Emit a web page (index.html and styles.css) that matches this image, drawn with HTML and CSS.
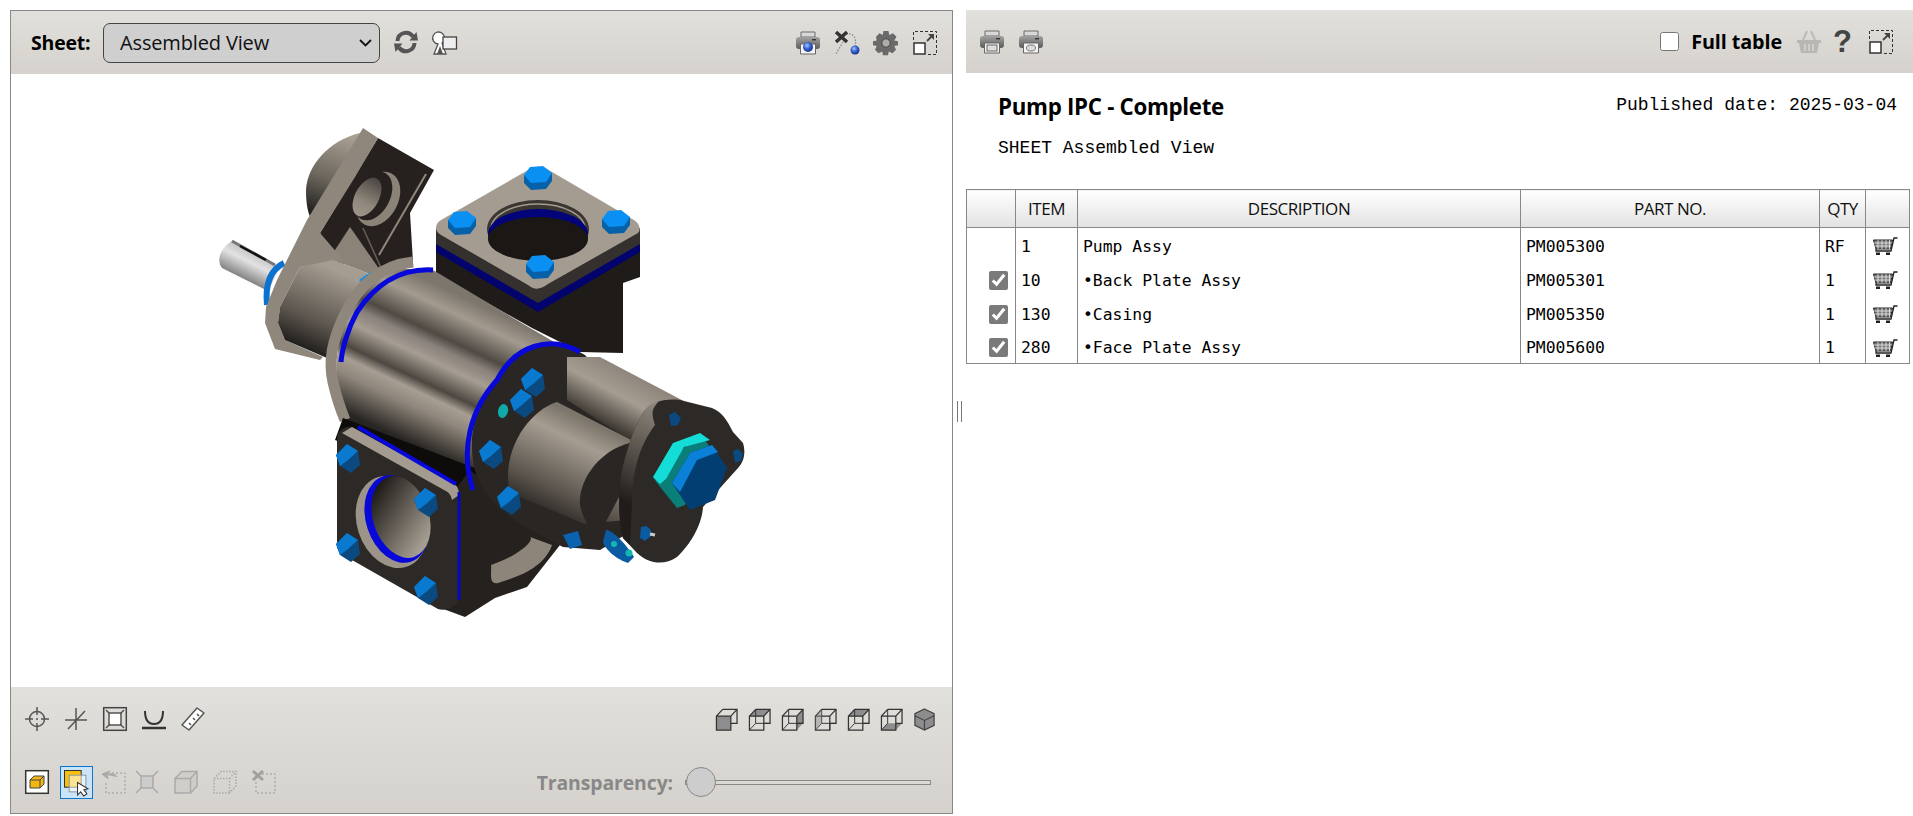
FILE: index.html
```html
<!DOCTYPE html>
<html lang="en">
<head>
<meta charset="utf-8">
<title>Pump IPC - Complete</title>
<link rel="stylesheet" href="styles.css">
</head>
<body>
<svg class="defs" width="0" height="0" aria-hidden="true">
  <defs>
    <linearGradient id="gPrint" x1="0" y1="0" x2="0" y2="1"><stop offset="0" stop-color="#a2a2a2"/><stop offset="1" stop-color="#5c5c5c"/></linearGradient>
    <radialGradient id="gBall" cx=".4" cy=".35" r=".7"><stop offset="0" stop-color="#a8c4f8"/><stop offset=".5" stop-color="#3360d0"/><stop offset="1" stop-color="#142c80"/></radialGradient>
    <symbol id="printer" viewBox="0 0 24 24">
      <path d="M5 1h14v5H5z" fill="#d8d8d8" stroke="#6a6a6a"/>
      <rect x="0" y="6" width="24" height="12" rx="3" fill="url(#gPrint)"/>
      <rect x="16" y="8" width="4" height="1.4" fill="#333"/>
      <path d="M4.5 13h15v10h-15z" fill="#f4f4f4" stroke="#666"/>
    </symbol>
    <symbol id="expand" viewBox="0 0 24 24">
      <path d="M.5 9V.5H23.500V23.500H14" fill="none" stroke="#333" stroke-dasharray="3 2"/>
      <rect x="1" y="12" width="11" height="11" fill="#fff" stroke="#333" stroke-width="1.500"/>
      <path d="M14 10 19 5" stroke="#444" stroke-width="1.800"/>
      <path d="M15 3H21V9Z" fill="#444"/>
    </symbol>
    <g id="cube">
      <path d="M1.500 8.500H16.500V23H1.500zM8 1.500H23V16H16.500M1.500 8.500L8 1.500M16.500 8.500L23 1.500" fill="none" stroke="#333" stroke-width="1.300"/>
    </g>
    <symbol id="cart" viewBox="0 0 26 20">
      <path d="M.5 4h19l-2 9H3z" fill="#777" stroke="#222"/>
      <path d="M1 7h18M2 10h16M5 4v9M9 4v9M13 4v9M16.500 4v9" stroke="#eee" stroke-width=".8"/>
      <path d="M3 13v2h15L21 2h3.500" fill="none" stroke="#222" stroke-width="1.300"/>
      <rect x="3" y="16.500" width="4" height="2.500" fill="#222"/><rect x="13" y="16.500" width="4" height="2.500" fill="#222"/>
    </symbol>
    <linearGradient id="gBarrel" gradientUnits="userSpaceOnUse" x1="390" y1="470" x2="470" y2="300">
      <stop offset="0" stop-color="#030303"/><stop offset=".18" stop-color="#2a2724"/><stop offset=".36" stop-color="#8f877c"/><stop offset=".44" stop-color="#a69e92"/><stop offset=".5" stop-color="#4c4741"/><stop offset=".62" stop-color="#a69e92"/><stop offset=".7" stop-color="#88807a"/><stop offset=".76" stop-color="#4e4943"/><stop offset=".9" stop-color="#a39b8f"/><stop offset="1" stop-color="#7d766c"/>
    </linearGradient>
    <linearGradient id="gCyl" gradientUnits="userSpaceOnUse" x1="525" y1="520" x2="575" y2="415">
      <stop offset="0" stop-color="#14110f"/><stop offset=".35" stop-color="#5a544d"/><stop offset=".8" stop-color="#a59d91"/><stop offset="1" stop-color="#7c756b"/>
    </linearGradient>
    <linearGradient id="gCylTop" gradientUnits="userSpaceOnUse" x1="590" y1="430" x2="625" y2="365">
      <stop offset="0" stop-color="#15120f"/><stop offset=".6" stop-color="#a59d91"/><stop offset="1" stop-color="#8a8278"/>
    </linearGradient>
    <linearGradient id="gLobe" gradientUnits="userSpaceOnUse" x1="295" y1="360" x2="335" y2="270">
      <stop offset="0" stop-color="#050505"/><stop offset=".45" stop-color="#5c564f"/><stop offset="1" stop-color="#a59d91"/>
    </linearGradient>
    <linearGradient id="gBear" gradientUnits="userSpaceOnUse" x1="315" y1="225" x2="345" y2="135">
      <stop offset="0" stop-color="#0c0c0c"/><stop offset=".5" stop-color="#6b655c"/><stop offset="1" stop-color="#a89f93"/>
    </linearGradient>
    <linearGradient id="gBore" gradientUnits="userSpaceOnUse" x1="372" y1="170" x2="372" y2="225">
      <stop offset="0" stop-color="#3a3632"/><stop offset=".6" stop-color="#8f877c"/><stop offset="1" stop-color="#a59d91"/>
    </linearGradient>
    <linearGradient id="gShaft" gradientUnits="userSpaceOnUse" x1="238" y1="282" x2="255" y2="248">
      <stop offset="0" stop-color="#666"/><stop offset=".6" stop-color="#e2e2e2"/><stop offset="1" stop-color="#b8b8b8"/>
    </linearGradient>
    <linearGradient id="gHole" gradientUnits="userSpaceOnUse" x1="375" y1="490" x2="420" y2="545">
      <stop offset="0" stop-color="#1c1916"/><stop offset="1" stop-color="#a59d91"/>
    </linearGradient>
    <linearGradient id="gRim" gradientUnits="userSpaceOnUse" x1="620" y1="500" x2="670" y2="400">
      <stop offset="0" stop-color="#1f1c1a"/><stop offset="1" stop-color="#9a9286"/>
    </linearGradient>
    <g id="boltUp">
      <path d="M-14-3V5L-7 12 8 11 14 3V-5Z" fill="#0661a8"/>
      <path d="M-14-3-8-11 5-12 14-5 8 4-7 5Z" fill="#0a90f2"/>
    </g>
    <g id="boltFront">
      <path d="M-13-3-2-14 9-7 11 7 2 15-9 8Z" fill="#0a4a80"/>
      <path d="M-13-3-2-14 9-7-1 2-9 8Z" fill="#0a7ad0"/>
    </g>
  </defs>
</svg>

<main class="page">
  <section class="viewer">
    <header class="bar bar-top">
      <label class="sheet-label" for="sheet">Sheet:</label>
      <select id="sheet" class="sheet-select"><option>Assembled View</option></select>
      <svg class="ic i-refresh" viewBox="0 0 24 24"><path d="M3.500 11A8.500 8.500 0 0 1 19 6.500" fill="none" stroke="#555" stroke-width="4"/><path d="M15.500 10.500 24 10.500 22.500 2z" fill="#555"/><path d="M20.500 13A8.500 8.500 0 0 1 5 17.500" fill="none" stroke="#555" stroke-width="4"/><path d="M8.500 13.500 0 13.500 1.500 22z" fill="#555"/></svg>
      <svg class="ic i-view" viewBox="0 0 24 24"><path d="M1 23 5 13A6 6 0 1 1 9 12L13 23Z" fill="#fff" stroke="#555" stroke-width="1.300"/><path d="M4 23 7 15l3 8z" fill="#555"/><rect x="10" y="6" width="13.500" height="12" fill="#eee" stroke="#444" stroke-width="1.300"/></svg>
      <span class="spacer"></span>
      <svg class="ic"><use href="#printer"/><circle cx="12" cy="16" r="5" fill="url(#gBall)"/></svg>
      <svg class="ic" viewBox="0 0 24 24"><path d="M11 3C19 2 21 6 20.500 15M8 11 1 23" fill="none" stroke="#888" stroke-width="1.300" stroke-dasharray="1.500 1.500"/><path d="M1 1 12 11M12 1 1 11" stroke="#333" stroke-width="3.500"/><circle cx="20" cy="19" r="4.500" fill="url(#gBall)"/></svg>
      <svg class="ic" viewBox="0 0 24 24"><path d="M9.500 0h5l.8 4 3.700-1.700 3.500 3.500L20.300 9.500l3.700.8v4l-3.700.8 1.700 3.700-3.500 3.500-3.700-1.700-.8 3.600h-5l-.8-3.600-3.700 1.700-3.500-3.500 1.700-3.700-3.700-.8v-4l3.700-.8L2 5.800l3.500-3.500 3.200 1.700z" fill="#6a6a6a"/><circle cx="12" cy="12" r="4.200" fill="#b0aca6" stroke="#444"/></svg>
      <svg class="ic"><use href="#expand"/></svg>
    </header>

    <div class="stage">
      <svg class="pump" viewBox="11 74 941 613" role="img" aria-label="Assembled pump model">
        <!-- shaft -->
        <path d="M232 241 280 267 268 291 222 268C217 262 218 250 232 241Z" fill="url(#gShaft)"/>
        <path d="M232 241 275 265" stroke="#777" stroke-width="3"/>
        <path d="M240 246 266 260" stroke="#111" stroke-width="2.500"/>
        <path d="M284 263C270 270 265 285 267 305" fill="none" stroke="#0b72d0" stroke-width="6"/>
        <!-- bearing behind the plate -->
        <path d="M360 133C330 140 307 165 306 190C306 205 308 215 313 222L362 150Z" fill="url(#gBear)"/>
        <!-- back plate -->
        <path d="M378 138 434 170 410 213 413 262 382 270 333 262 320 233Z" fill="#26211f"/>
        <path d="M350 227 382 273 367 273 333 260 333 253Z" fill="#8b8378"/>
        <path d="M363 228 382 270" stroke="#67605a" stroke-width="1.500"/>
        <path d="M363 128 378 138 355 177 320 233 345 262 300 267 280 307 278 323 285 340 323 357 320 360 275 349 265 323 266 307 277 280 307 220Z" fill="#8f877c"/>
        <ellipse cx="378" cy="199" rx="20" ry="29" transform="rotate(28 378 199)" fill="#8b8378"/>
        <ellipse cx="373" cy="196" rx="17" ry="26" transform="rotate(28 373 196)" fill="#26211f"/>
        <ellipse cx="367" cy="197" rx="12" ry="21" transform="rotate(28 367 197)" fill="url(#gBore)"/>
        <path d="M426 174 379 255" stroke="#8f877c" stroke-width="2"/>
        <path d="M333 260 300 267 280 307 278 323 285 340 327 358 345 345 375 285 367 273Z" fill="url(#gLobe)"/>
        <path d="M370 272 373 281 365 287 359 280Z" fill="#0a90f2"/>

        <!-- neck & top flange -->
        <path d="M436 228V274L532 328 580 352 623 353V283L640 277V228L538 285Z" fill="#1f1b19"/>
        <path d="M436 228 538 288 640 228V248L538 308 436 248Z" fill="#34302d"/>
        <path d="M436 244 538 303 640 244V252L538 312 436 252Z" fill="#03036e"/>
        <path d="M436 228C436 224 438 222 441 220L530 169C536 166 541 166 547 169L634 220C640 224 641 230 638 233L548 284C540 290 534 290 528 285L441 235C438 233 436 231 436 228Z" fill="#a59c91"/>
        <ellipse cx="538" cy="229" rx="51" ry="29" fill="#3a3632"/>
        <ellipse cx="538" cy="229" rx="47" ry="25" fill="none" stroke="#a59c91" stroke-width="1.500"/>
        <ellipse cx="538" cy="234" rx="50" ry="25" fill="#04047a"/>
        <ellipse cx="538" cy="239" rx="50" ry="22" fill="#1b1715"/>
        <use href="#boltUp" x="538" y="178"/>
        <use href="#boltUp" x="462" y="223"/>
        <use href="#boltUp" x="616" y="222"/>
        <use href="#boltUp" x="540" y="267"/>

        <!-- main barrel -->
        <path d="M345 420C325 370 340 300 385 268L433 270 525 325 585 360 560 430 470 485Z" fill="url(#gBarrel)"/>
        <path d="M413 262C385 265 360 280 343 318 333 340 328 360 333 382 336 395 340 408 345 420" fill="none" stroke="#8f877c" stroke-width="11"/>
        <path d="M433 270C400 268 375 285 357 312 347 330 342 350 341 362" fill="none" stroke="#0808d8" stroke-width="5"/>

        <!-- lower body & flange -->
        <path d="M343 418 335 440 460 490 480 470Z" fill="#0e0c0b"/>
        <path d="M457 487 470 470 560 545 527 587 495 598 465 617 438 607Z" fill="#25211f"/>
        <path d="M491 565C520 555 535 540 530 537L552 545C545 565 525 575 498 583 488 585 492 572 491 565Z" fill="#8d857a"/>
        <path d="M337 440C337 430 345 426 352 427L452 482C458 486 459 490 459 495V598C459 606 446 612 438 609L345 556C340 552 337 550 337 545Z" fill="#2d2926"/>
        <path d="M352 427 452 482C458 486 459 490 459 495L452 500C451 494 448 492 444 490L342 433Z" fill="#a49b90"/>
        <path d="M358 427 456 484" stroke="#0808d8" stroke-width="4"/>
        <path d="M459 492V600" stroke="#0808b8" stroke-width="3"/>
        <ellipse cx="392" cy="522" rx="35" ry="47" transform="rotate(-18 392 522)" fill="#9c9489"/>
        <ellipse cx="397" cy="519" rx="31" ry="45" transform="rotate(-18 397 519)" fill="#0808d8"/>
        <ellipse cx="401" cy="517" rx="28" ry="42" transform="rotate(-18 401 517)" fill="url(#gHole)"/>
        <use href="#boltFront" x="349" y="458"/>
        <use href="#boltFront" x="427" y="502"/>
        <use href="#boltFront" x="349" y="547"/>
        <use href="#boltFront" x="427" y="590"/>

        <!-- rear flange of gearbox -->
        <path d="M497 380C515 345 550 335 585 355L640 420 625 535 600 550 563 547C530 530 485 510 475 470C465 430 480 400 497 380Z" fill="#2a2624"/>
        <path d="M580 352C550 335 515 345 497 380C470 410 460 450 473 490" fill="none" stroke="#0808d8" stroke-width="5"/>
        <!-- underside bits -->
        <path d="M563 535 578 531 582 545 570 549Z" fill="#0b62ae"/>
        <path d="M606 530C615 530 632 553 634 557L628 563C618 560 605 550 603 542Z" fill="#0a5ba2"/>
        <circle cx="614" cy="544" r="3" fill="#12b8b0"/><circle cx="629" cy="553" r="3.500" fill="#12b8b0"/>
        <!-- upper cylinder -->
        <path d="M567 357 600 357 697 408 660 460 567 400Z" fill="url(#gCylTop)"/>
        <!-- front cylinder -->
        <path d="M557 402 637 443 625 520 585 524 510 493C500 450 530 410 557 402Z" fill="url(#gCyl)"/>
        <path d="M630 443C600 450 578 480 580 505 582 515 585 520 588 525L600 533 628 480Z" fill="#2a2624"/>
        <!-- end plate -->
        <path d="M643 413C650 402 665 398 680 400L712 408C722 412 727 420 733 432L743 443C746 452 744 462 738 468L703 507C702 525 690 545 677 557 665 565 650 565 637 553L623 538C618 520 618 490 622 470 628 445 635 425 643 413Z" fill="#2d2926"/>
        <path d="M643 413C635 425 628 445 622 470 618 490 618 520 623 538L630 545 632 505C632 470 640 445 655 425 652 415 650 410 660 400 652 402 646 408 643 413Z" fill="url(#gRim)"/>
        <!-- bolts on plate -->
        <use href="#boltFront" x="492" y="454"/>
        <use href="#boltFront" x="523" y="403"/>
        <use href="#boltFront" x="534" y="382"/>
        <use href="#boltFront" x="510" y="500"/>
        <ellipse cx="503" cy="411" rx="5" ry="7" fill="#10a8a8" transform="rotate(15 503 411)"/>
        <path d="M669 415 675 412 681 418 678 425 671 426Z" fill="#0a4a80"/>
        <path d="M733 451 738 449 743 454 741 461 735 463Z" fill="#0a4a80"/>
        <path d="M641 527 646 526 651 530 651 536 645 541 640 538Z" fill="#0a5ba2"/>
        <path d="M650 534 655 535" stroke="#ccc" stroke-width="3"/>
        <!-- plug -->
        <path d="M653 477 657 483 677 508 685 505 712 450 700 433Z" fill="#0a7f7a"/>
        <path d="M653 477 673 443 700 433 710 440 684 447 666 479 660 484Z" fill="#14dcd6"/>
        <path d="M672 483 690 453 712 445 727 468 715 500 690 510Z" fill="#023e72"/>
        <path d="M672 483 690 453 712 445 718 452 697 460 680 492Z" fill="#0a80d8"/>
      </svg>
    </div>

    <footer class="bar bar-bottom">
      <div class="row row-one">
        <svg class="ic tool" viewBox="0 0 24 24"><circle cx="12" cy="12" r="7.500" fill="none" stroke="#555" stroke-width="1.500"/><path d="M12 0V8M12 16V24M0 12H8M16 12H24" stroke="#555" stroke-width="1.500"/><circle cx="12" cy="12" r="1" fill="#555"/></svg>
        <svg class="ic tool" viewBox="0 0 24 24"><path d="M12 1V23M1 13H23M4 22 21 4" stroke="#555" stroke-width="1.500"/></svg>
        <svg class="ic tool" viewBox="0 0 24 24"><rect x=".7" y=".7" width="22.600" height="22.600" fill="none" stroke="#444" stroke-width="1.500"/><rect x="6" y="6" width="12" height="12" fill="#fff" stroke="#555" stroke-width="1.500"/><path d="M3 3 7 7M21 3 17 7M3 21 7 17M21 21 17 17" stroke="#555" stroke-width="1.500"/></svg>
        <svg class="ic tool" viewBox="0 0 24 24"><path d="M3 4C3 14 7 17 12 17S21 14 21 4" fill="none" stroke="#333" stroke-width="2"/><path d="M0 21H24" stroke="#333" stroke-width="2.500"/></svg>
        <svg class="ic tool" viewBox="0 0 24 24"><path d="M16 1 23 6 8 23 1 18Z" fill="#fff" stroke="#555" stroke-width="1.500" stroke-linejoin="round"/><path d="M16 7 18 9M12 11 14 13M8 16 10 18" stroke="#555" stroke-width="1.500"/></svg>
        <span class="spacer"></span>
        <span class="cubes">
          <svg class="ic cube" viewBox="0 0 24 24"><rect x="1.500" y="8.500" width="15" height="14.500" fill="#8d8d8d"/><use href="#cube"/></svg>
          <svg class="ic cube" viewBox="0 0 24 24"><path d="M8 1.500H23L16.500 8.500H1.500Z" fill="#8d8d8d"/><use href="#cube"/><path d="M8 1.500V16H23M8 16 1.500 23" fill="none" stroke="#333"/></svg>
          <svg class="ic cube" viewBox="0 0 24 24"><path d="M16.500 8.500 23 1.500V16L16.500 23Z" fill="#8d8d8d"/><use href="#cube"/><path d="M8 1.500V16H23M8 16 1.500 23" fill="none" stroke="#333"/></svg>
          <svg class="ic cube" viewBox="0 0 24 24"><use href="#cube"/><path d="M8 1.500V16H23M8 16 1.500 23M16.500 16V23" fill="none" stroke="#333"/><path d="M1.500 8.500 8 1.500V16L1.500 23Z" fill="#8d8d8d" opacity=".5"/></svg>
          <svg class="ic cube" viewBox="0 0 24 24"><path d="M8 1.500H23L16.500 8.500H1.500Z" fill="#8d8d8d"/><use href="#cube"/><path d="M8 1.500V16H23M8 16 1.500 23" fill="none" stroke="#333"/></svg>
          <svg class="ic cube" viewBox="0 0 24 24"><path d="M8 16H23L16.500 23H1.500Z" fill="#8d8d8d"/><use href="#cube"/><path d="M8 1.500V16M8 16 1.500 23" fill="none" stroke="#333"/></svg>
          <svg class="ic cube" viewBox="0 0 24 24"><path d="M12 1 22 6V18L12 23 2 18V6Z" fill="#8d8d8d" stroke="#444" stroke-width="1.300"/><path d="M2 8 12 13 22 8M12 13V23" fill="none" stroke="#444" stroke-width="1.200"/></svg>
        </span>
      </div>
      <div class="row row-two">
        <svg class="ic t2" viewBox="0 0 24 24"><rect x=".7" y=".7" width="22.600" height="22.600" fill="#fff" stroke="#333" stroke-width="1.500"/><path d="M5 10 9 6H19V14L15 18H5Z" fill="#f2b713" stroke="#444"/><path d="M5 10H15V18M15 10 19 6" fill="none" stroke="#444"/></svg>
        <span class="t2-active"><svg class="ic" viewBox="0 0 24 24"><rect x=".5" y=".5" width="16" height="16" fill="#fcc20b" stroke="#333"/><rect x="5" y="5" width="16" height="16" fill="#fff" fill-opacity=".55" stroke="#8a9aa8"/><path d="M13 12 13 24 16 21 19 25 22 23 19 19 23 18Z" fill="#fff" stroke="#333"/></svg></span>
        <svg class="ic t2 off" viewBox="0 0 24 24"><path d="M10 3H23V23H4V11" fill="none" stroke="#999" stroke-dasharray="2 2"/><path d="M15 7C13 3 8 3 5 5L8 1 0 4 6 9 5 5" fill="#aaa" stroke="#aaa"/></svg>
        <svg class="ic t2 off" viewBox="0 0 24 24"><rect x="6" y="6" width="12" height="12" fill="#ccc" stroke="#aaa" stroke-width="1.500"/><path d="M1 1 6 6M23 1 18 6M1 23 6 18M23 23 18 18" stroke="#aaa" stroke-width="1.500"/></svg>
        <svg class="ic t2 off gap" viewBox="0 0 24 24"><path d="M1 8.500H16.500V23H1ZM1 8.500 8 1.500H23V16L16.500 23M16.500 8.500 23 1.500" fill="#d0cec9" stroke="#aaa" stroke-width="1.500"/></svg>
        <svg class="ic t2 off gap" viewBox="0 0 24 24"><path d="M1 8.500H16.500V23H1ZM1 8.500 8 1.500H23V16L16.500 23M16.500 8.500 23 1.500" fill="none" stroke="#aaa" stroke-width="1.500" stroke-dasharray="1.500 1.500"/></svg>
        <svg class="ic t2 off gap" viewBox="0 0 24 24"><path d="M10 4H23V23H4V12" fill="none" stroke="#999" stroke-dasharray="2 2"/><path d="M1 1 11 10M11 1 1 10" stroke="#a0a0a0" stroke-width="3"/></svg>
        <span class="spacer"></span>
        <label class="trans-label" for="trans">Transparency:</label>
        <input id="trans" class="trans" type="range" min="0" max="100" value="0">
      </div>
    </footer>
  </section>

  <div class="splitter"><span></span><span></span></div>

  <section class="parts">
    <header class="bar bar-parts">
      <svg class="ic"><use href="#printer"/><rect x="7" y="15" width="10" height="6" fill="#ddd" stroke="#666"/></svg>
      <svg class="ic"><use href="#printer"/><ellipse cx="12" cy="18" rx="4.500" ry="3" fill="#ddd" stroke="#777"/></svg>
      <span class="spacer"></span>
      <input id="full" class="full-check" type="checkbox">
      <label class="full-label" for="full">Full table</label>
      <svg class="ic i-basket" viewBox="0 0 24 24"><path d="M6 10 10 1M18 10 14 1" stroke="#bbb" stroke-width="2" fill="none"/><path d="M0 10H24V13H22L20 23H4L2 13H0Z" fill="#b9b7b3"/><path d="M8 14V21M12 14V21M16 14V21" stroke="#d8d6d2" stroke-width="1.500"/></svg>
      <span class="help">?</span>
      <svg class="ic i-exp"><use href="#expand"/></svg>
    </header>

    <div class="doc-head">
      <h1 class="doc-title">Pump IPC - Complete</h1>
      <p class="doc-date">Published date: 2025-03-04</p>
    </div>
    <p class="doc-sheet">SHEET Assembled View</p>

    <table class="bom">
      <colgroup><col class="c-check"><col class="c-item"><col class="c-desc"><col class="c-part"><col class="c-qty"><col class="c-cart"></colgroup>
      <thead><tr><th></th><th>ITEM</th><th>DESCRIPTION</th><th>PART NO.</th><th>QTY</th><th></th></tr></thead>
      <tbody>
        <tr><td class="chk"></td><td>1</td><td>Pump Assy</td><td>PM005300</td><td>RF</td><td class="ct"><svg class="cart"><use href="#cart"/></svg></td></tr>
        <tr><td class="chk"><input type="checkbox" checked aria-label="Select 10"></td><td>10</td><td>•Back Plate Assy</td><td>PM005301</td><td>1</td><td class="ct"><svg class="cart"><use href="#cart"/></svg></td></tr>
        <tr><td class="chk"><input type="checkbox" checked aria-label="Select 130"></td><td>130</td><td>•Casing</td><td>PM005350</td><td>1</td><td class="ct"><svg class="cart"><use href="#cart"/></svg></td></tr>
        <tr><td class="chk"><input type="checkbox" checked aria-label="Select 280"></td><td>280</td><td>•Face Plate Assy</td><td>PM005600</td><td>1</td><td class="ct"><svg class="cart"><use href="#cart"/></svg></td></tr>
      </tbody>
    </table>
  </section>
</main>
</body>
</html>
```

FILE: styles.css
```css
html, body { margin: 0; padding: 0; background: #fff; }
body { font-family: "Open Sans", "Noto Sans", sans-serif; color: #000; }
.defs { position: absolute; height: 0; width: 0; }

.page { display: flex; align-items: flex-start; padding: 10px 0 0 10px; height: 816px; box-sizing: border-box; }

.viewer { width: 943px; height: 804px; box-sizing: border-box; border: 1px solid #888; display: flex; flex-direction: column; flex: none; }
.parts { flex: 1; min-width: 0; }

.bar { display: flex; align-items: center; background: linear-gradient(#e2e0dc, #d5d2cd); }
.spacer { flex: 1; }
.ic { display: block; width: 24px; height: 24px; flex: none; overflow: visible; }

.bar-top { height: 63px; padding: 0 15px 0 20px; box-sizing: border-box; flex: none; }
.bar-top .ic + .ic { margin-left: 15px; }
.bar-top .i-refresh { margin-left: 14px; margin-top: -1px; }
.bar-top .i-view { margin-left: 15px; }
.bar-top .spacer + .ic { margin-left: 0; }
.sheet-label { font-weight: 700; font-size: 19.500px; letter-spacing: -.2px; width: 72px; flex: none; }
.sheet-select { appearance: none; -webkit-appearance: none; width: 277px; height: 40px; box-sizing: border-box; background: #cfcfcf url("data:image/svg+xml,%3Csvg xmlns='http://www.w3.org/2000/svg' width='13' height='8' viewBox='0 0 13 8'%3E%3Cpath d='M1 1l5.500 5.500L12 1' fill='none' stroke='%23111' stroke-width='1.800'/%3E%3C/svg%3E") no-repeat right 7px center; border: 1px solid #444; border-radius: 7px; font: 20px "Open Sans", sans-serif; letter-spacing: -.15px; color: #111; padding-left: 16px; }

.stage { flex: 1; min-height: 0; background: #fff; }
.pump { display: block; width: 941px; height: 613px; }

.bar-bottom { height: 126px; flex-direction: column; align-items: stretch; flex: none; }
.row { display: flex; align-items: center; }
.row-one { height: 64px; padding: 0 16px 0 14px; box-sizing: border-box; }
.tool + .tool { margin-left: 15px; }
.cubes { display: flex; gap: 10px; }
.cube { width: 23px; height: 23px; }
.row-two { height: 62px; padding: 0 21px 0 14px; box-sizing: border-box; }
.t2-active { display: flex; align-items: center; justify-content: center; width: 33px; height: 33px; margin: 0 9px 0 11px; box-sizing: border-box; border: 1px solid #0a78d0; background: #cce4f7; }
.t2-active .ic { width: 25px; height: 25px; }
.off + .off { margin-left: 9px; }
.off.gap { margin-left: 15px; }
.trans-label { font-weight: 700; font-size: 19.400px; letter-spacing: -.1px; color: #888; margin-right: 12px; }
.trans { appearance: none; -webkit-appearance: none; width: 246px; height: 30px; margin: 0; background: transparent; }
.trans::-webkit-slider-runnable-track { height: 5px; background: #dcdad6; border: 1px solid #888; box-sizing: border-box; }
.trans::-webkit-slider-thumb { -webkit-appearance: none; width: 30px; height: 30px; margin-top: -13.500px; border-radius: 50%; background: #cdcdcd; border: 1px solid #888; box-sizing: border-box; }

.splitter { width: 13px; height: 21px; margin-top: 391px; display: flex; justify-content: center; gap: 3px; flex: none; }
.splitter span { width: 1px; height: 100%; background: #777; }

.bar-parts { height: 63px; padding: 0 20px 0 14px; box-sizing: border-box; }
.bar-parts .ic + .ic { margin-left: 15px; }
.full-check { width: 19px; height: 19px; margin: 0 12px 0 0; flex: none; }
.full-label { font-weight: 700; font-size: 19.800px; letter-spacing: -.1px; margin-right: 15px; }
.bar-parts .ic.i-basket { margin-left: 0; }
.help { font: 700 31px/24px "Liberation Sans", sans-serif; color: #444; margin: 0 17px 0 12px; width: 19px; text-align: center; }
.bar-parts .i-exp { margin-left: 0; }

.doc-head { display: flex; justify-content: space-between; padding: 18px 16px 0 32px; }
.doc-title { margin: 0; font-size: 22.300px; line-height: 32px; font-weight: 700; letter-spacing: -.3px; }
.doc-date { margin: 2px 0 0; font: 18px/24px "Liberation Mono", monospace; }
.doc-sheet { margin: 13px 0 0 32px; font: 18px/24px "Liberation Mono", monospace; }

.bom { width: 943px; margin-top: 29px; border-collapse: collapse; table-layout: fixed; border: 1px solid #888; }
.c-check { width: 49px; } .c-item { width: 62px; } .c-desc { width: 443px; } .c-part { width: 299px; } .c-qty { width: 46px; } .c-cart { width: 44px; }
.bom th { height: 37px; padding: 0; border: 1px solid #888; background: linear-gradient(#fff, #e2e2e2); font-weight: 400; font-size: 17px; letter-spacing: -.45px; color: #111; }
.bom td { height: 34px; padding: 3px 0 0 5px; font: 16.400px "DejaVu Sans Mono", monospace; border-left: 1px solid #888; border-right: 1px solid #888; box-sizing: border-box; }
.bom td.chk { padding: 0 7px 0 0; text-align: right; }
.chk input { width: 19px; height: 19px; margin: 3px 0 0; accent-color: #7a7a7a; vertical-align: middle; }
.bom td.ct { padding: 3px 0 0 7px; }
.cart { display: block; width: 26px; height: 20px; }
```
